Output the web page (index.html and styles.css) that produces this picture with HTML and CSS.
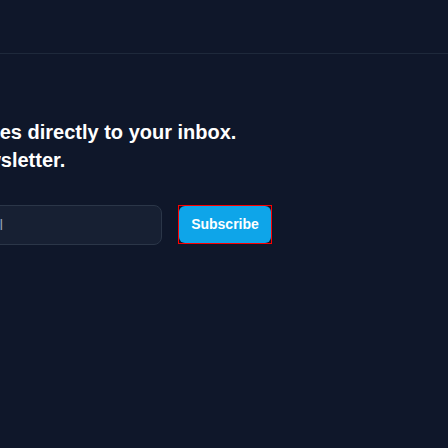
FILE: index.html
```html
<!DOCTYPE html>
<html lang="en">
<head>
<meta charset="utf-8">
<title>Newsletter</title>
<link rel="stylesheet" href="styles.css">
</head>
<body>
<header class="topbar"></header>
<main class="content">
  <h2 class="headline">Get the latest updates directly to your inbox.<br>Sign up for our newsletter.</h2>
  <form class="signup">
    <input class="email" type="email" placeholder="Enter your email">
    <span class="btn-frame"><button class="btn" type="button">Subscribe</button></span>
  </form>
</main>
</body>
</html>
```
FILE: styles.css
```css
html, body {
  margin: 0;
  padding: 0;
  background: #0f172a;
  overflow: hidden;
}
body {
  width: 448px;
  height: 448px;
  font-family: "Liberation Sans", Arial, sans-serif;
  color: #ffffff;
}
.topbar {
  height: 53px;
  border-bottom: 1px solid #1e293b;
}
.content {
  padding-top: 64px;
}
.headline {
  margin: 0 0 0 -187px;
  font-size: 20px;
  line-height: 28px;
  font-weight: 700;
  white-space: nowrap;
  color: #ffffff;
}
.signup {
  display: flex;
  align-items: flex-start;
  gap: 16px;
  margin: 31px 0 0 -116px;
}
.email {
  box-sizing: border-box;
  width: 278px;
  height: 40px;
  padding: 0 16px;
  background: #172033;
  border: 1px solid #2b3648;
  border-radius: 8px;
  color: #ffffff;
  font-family: "Liberation Sans", Arial, sans-serif;
  font-size: 14px;
  outline: none;
}
.email::placeholder {
  color: #94a3b8;
}
.btn-frame {
  display: block;
  border: 1px solid #ff0000;
  line-height: 0;
}
.btn {
  box-sizing: border-box;
  height: 37px;
  width: 92px;
  padding: 0;
  border: 0;
  border-radius: 6px;
  background: #0ea5e9;
  color: #ffffff;
  font-family: "Liberation Sans", Arial, sans-serif;
  font-size: 14px;
  font-weight: 700;
  line-height: 37px;
}
```
